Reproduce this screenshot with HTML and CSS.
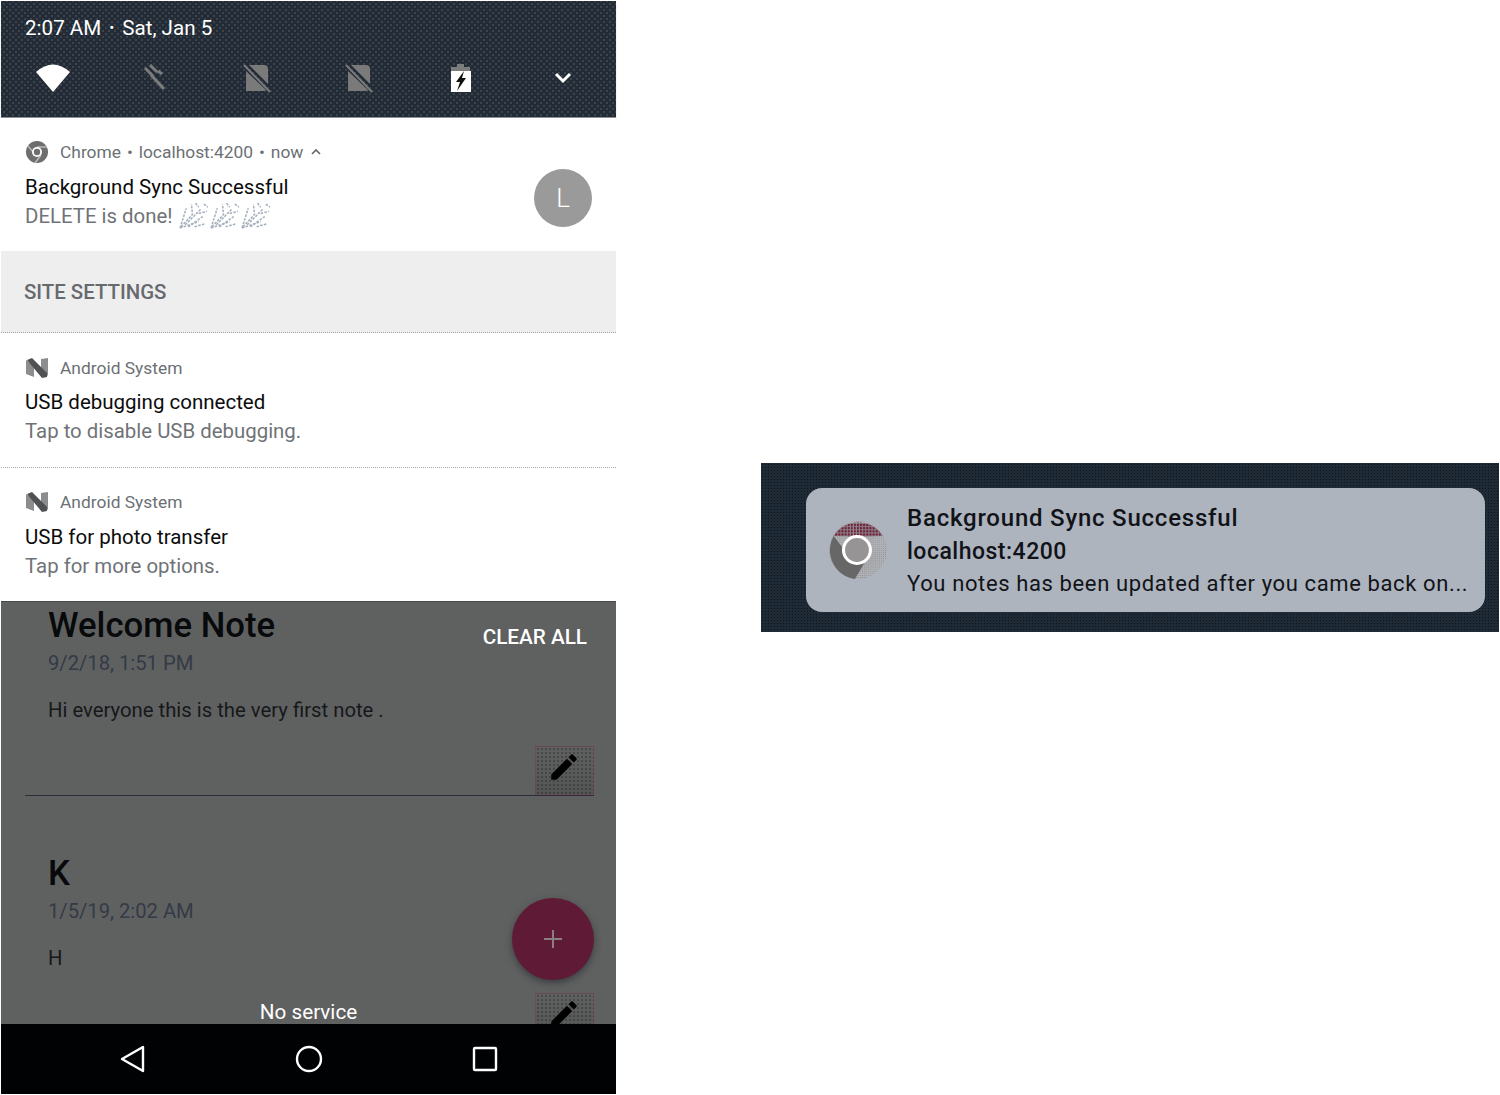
FILE: index.html
```html
<!DOCTYPE html>
<html lang="en">

<head>
    <meta charset="UTF-8">
    <meta name="viewport" content="width=device-width, initial-scale=1.0">
    <title>Background Sync</title>
    <link rel="stylesheet" href="styles.css">
</head>

<body>

    <svg class="defs" width="0" height="0">
        <defs>
            <pattern id="red-dots" width="3" height="3" patternUnits="userSpaceOnUse">
                <rect width="3" height="3" fill="#8e8a8b"></rect>
                <rect width="2" height="2" fill="#6f1a38"></rect>
            </pattern>
            <pattern id="grey-dots" width="2" height="2" patternUnits="userSpaceOnUse">
                <rect width="2" height="2" fill="#b0b3b8"></rect>
                <rect width="1" height="1" fill="#8f8d8e"></rect>
            </pattern>
            <symbol id="n-logo" viewBox="0 0 24 20">
                <path d="M1 2 L9 7 V19 L1 16 Z" fill="#8b8d8f"></path>
                <path d="M16 1 L23 0 V18 L16 12 Z" fill="#8b8d8f"></path>
                <path d="M2 2 L7 0 L22 15 V19 L17 20 Z" fill="#4f5254"></path>
            </symbol>
            <symbol id="pencil" viewBox="0 0 24 24">
                <path d="M3 17.25V21h3.75L17.81 9.94l-3.75-3.75L3 17.25zM20.71 7.04c.39-.39.39-1.02 0-1.41l-2.34-2.34c-.39-.39-1.02-.39-1.41 0l-1.83 1.83 3.75 3.75 1.83-1.83z"></path>
            </symbol>
            <symbol id="sim-off" viewBox="0 0 28 30">
                <path d="M6 2 H21 Q25 2 25 6 V21 Z" fill="#7a7a7a"></path>
                <path d="M3 8 L23 27 Q22 28 20 28 H3 Z" fill="#7a7a7a"></path>
                <path d="M1 2 L27 29" stroke="#7a7a7a" stroke-width="2"></path>
            </symbol>
            <symbol id="party" viewBox="0 0 30 26">
                <g fill="none" stroke="#a6b0be" stroke-width="1.5" stroke-dasharray="2.5 1.2">
                    <path d="M2 25 L8 6"></path>
                    <path d="M2 25 L20 19"></path>
                    <path d="M3 24 L14 12 L13 2"></path>
                    <path d="M7 22 L22 7"></path>
                    <path d="M10 24 L24 14"></path>
                    <path d="M25 2 L29 5"></path>
                    <path d="M17 1 L20 5"></path>
                    <path d="M16 24 L26 21"></path>
                    <path d="M20 11 L28 9"></path>
                </g>
            </symbol>
        </defs>
    </svg>

    <div class="page">

        <div class="phone">

            <header class="shade dots">
                <div class="shade-date">
                    <span>2:07 AM</span>
                    <span class="shade-sep">•</span>
                    <span>Sat, Jan 5</span>
                </div>
                <div class="shade-icons">
                    <svg width="36" height="30" viewBox="0 0 36 30">
                        <path d="M1 9 Q18 -6 35 9 L18 29 Z" fill="#fff"></path>
                    </svg>
                    <svg width="26" height="28" viewBox="0 0 26 28">
                        <path d="M3 4 L11 12 M8 1 L15 8 M9 11 L22 25 M16 7 L20 10" stroke="#7c7c7c" stroke-width="3" fill="none"></path>
                    </svg>
                    <svg width="28" height="30"><use href="#sim-off"></use></svg>
                    <svg width="28" height="30"><use href="#sim-off"></use></svg>
                    <svg width="22" height="30" viewBox="0 0 22 30">
                        <path d="M7 1 H14 V4 H20 V8 H1 V4 H7 Z" fill="#7c7c7c"></path>
                        <path d="M1 8 H21 V29 H1 Z" fill="#fff"></path>
                        <path d="M14 8 L6 19 H10 L7 28 L16 15 H12 Z" fill="#111"></path>
                    </svg>
                    <svg width="18" height="12" viewBox="0 0 18 12">
                        <path d="M2 2 L9 9 L16 2" stroke="#fff" stroke-width="3" fill="none"></path>
                    </svg>
                </div>
            </header>

            <section class="notif notif-chrome">
                <div class="notif-main">
                    <div class="notif-app">
                        <svg class="app-icon" width="24" height="24" viewBox="0 0 24 24">
                            <circle cx="12" cy="12" r="11" fill="#6e6e6e"></circle>
                            <path d="M3 6 L9 13 M12 7 H22 M16 15 L10 23" stroke="#bbb" stroke-width="1.4"></path>
                            <circle cx="12" cy="12" r="5" fill="#fff"></circle>
                            <circle cx="12" cy="12" r="3.2" fill="#6e6e6e"></circle>
                        </svg>
                        <span class="app-line">Chrome • localhost:4200 • now</span>
                        <svg class="app-caret" width="12" height="8" viewBox="0 0 12 8">
                            <path d="M2 6 L6 2 L10 6" stroke="#666" stroke-width="1.6" fill="none"></path>
                        </svg>
                    </div>
                    <div class="notif-title">Background Sync Successful</div>
                    <div class="notif-body body-party">
                        DELETE is done!
                        <span class="party-row">
                            <svg width="31" height="27"><use href="#party"></use></svg>
                            <svg width="31" height="27"><use href="#party"></use></svg>
                            <svg width="31" height="27"><use href="#party"></use></svg>
                        </span>
                    </div>
                </div>
                <div class="avatar">L</div>
            </section>

            <div class="site-settings">SITE SETTINGS</div>

            <section class="notif notif-system">
                <div class="notif-main">
                    <div class="notif-app">
                        <svg class="app-icon" width="24" height="20"><use href="#n-logo"></use></svg>
                        <span>Android System</span>
                    </div>
                    <div class="notif-title">USB debugging connected</div>
                    <div class="notif-body">Tap to disable USB debugging.</div>
                </div>
            </section>

            <section class="notif notif-system no-line">
                <div class="notif-main">
                    <div class="notif-app">
                        <svg class="app-icon" width="24" height="20"><use href="#n-logo"></use></svg>
                        <span>Android System</span>
                    </div>
                    <div class="notif-title">USB for photo transfer</div>
                    <div class="notif-body">Tap for more options.</div>
                </div>
            </section>

            <div class="behind">
                <article class="note note-first">
                    <h2 class="note-title">Welcome Note</h2>
                    <p class="note-date">9/2/18, 1:51 PM</p>
                    <p class="note-text">Hi everyone this is the very first note .</p>
                    <div class="edit-box">
                        <svg width="34" height="34"><use href="#pencil"></use></svg>
                    </div>
                </article>
                <article class="note">
                    <h2 class="note-title">K</h2>
                    <p class="note-date">1/5/19, 2:02 AM</p>
                    <p class="note-text">H</p>
                    <div class="edit-box">
                        <svg width="34" height="34"><use href="#pencil"></use></svg>
                    </div>
                </article>

                <div class="clear-all">CLEAR ALL</div>
                <div class="fab">
                    <svg width="22" height="22" viewBox="0 0 22 22">
                        <path d="M11 2 V20 M2 11 H20" stroke="#8b7f83" stroke-width="2"></path>
                    </svg>
                </div>
                <div class="no-service">No service</div>
            </div>

            <nav class="navbar">
                <svg width="26" height="28" viewBox="0 0 26 28">
                    <path d="M23 2 V26 L2 14 Z" fill="none" stroke="#fff" stroke-width="2.4" stroke-linejoin="round"></path>
                </svg>
                <svg width="28" height="28" viewBox="0 0 28 28">
                    <circle cx="14" cy="14" r="12" fill="none" stroke="#fff" stroke-width="2.4"></circle>
                </svg>
                <svg width="26" height="26" viewBox="0 0 26 26">
                    <rect x="2" y="2" width="22" height="22" rx="1" fill="none" stroke="#fff" stroke-width="2.4"></rect>
                </svg>
            </nav>
        </div>

        <aside class="toast-wrap dots-fine">
            <div class="toast">
                <svg class="toast-icon" width="58" height="58" viewBox="0 0 56 56">
                    <circle cx="28" cy="28" r="28" fill="url(#grey-dots)"></circle>
                    <path d="M4.5 14.5 A28 28 0 0 1 52 14.5 L28 15 Z" fill="url(#red-dots)"></path>
                    <path d="M4.5 14.5 A28 28 0 0 0 25 56 L35 39 L18 32 Z" fill="#666766"></path>
                    <circle cx="27" cy="28" r="13" fill="#979495" stroke="#fff" stroke-width="3"></circle>
                </svg>
                <div class="toast-text">
                    <div class="toast-title">Background Sync Successful</div>
                    <div class="toast-site">localhost:4200</div>
                    <div class="toast-msg">You notes has been updated after you came back on...</div>
                </div>
            </div>
        </aside>

    </div>

</body>

</html>
```
FILE: styles.css
```css
* {
    margin: 0;
    box-sizing: border-box;
}

html,
body {
    height: 100%;
    overflow: hidden;
}

body {
    background-color: #fff;
    font-family: 'Roboto', sans-serif;
}

.defs {
    position: absolute;
}

.page {
    display: flex;
    align-items: flex-start;
    padding: 1px 1px 0 1px;
}

.phone {
    width: 615px;
    height: 1093px;
    display: flex;
    flex-direction: column;
    flex-shrink: 0;
}

/* ---- status shade ---- */
.dots {
    background-color: #222b36;
    background-image:
        radial-gradient(circle, rgba(170, 175, 180, .42) .6px, transparent .8px),
        radial-gradient(circle, rgba(170, 175, 180, .42) .6px, transparent .8px);
    background-size: 6px 6px;
    background-position: 0 0, 3px 3px;
}

.shade {
    height: 117px;
    color: #fff;
    border-bottom: 1px solid #8f949b;
    box-shadow: 0 2px 2px #e4e4e4;
}

.shade-date {
    display: flex;
    align-items: center;
    gap: 7px;
    padding: 15px 0 0 24px;
    font-size: 20.6px;
    line-height: 24px;
}

.shade-sep {
    font-size: 15px;
    margin: 0 1px;
}

.shade-icons {
    display: grid;
    grid-template-columns: repeat(6, 102px);
    justify-items: center;
    align-items: center;
    padding: 19px 0 0 1px;
    height: 56px;
}

/* ---- notifications ---- */
.notif {
    display: flex;
    justify-content: space-between;
    padding: 0 24px;
    background-color: #fff;
}

.notif-chrome {
    height: 133px;
    padding-top: 22px;
}

.notif-system {
    height: 135px;
    padding-top: 23px;
    border-bottom: 1px dotted #a9adb3;
}

.no-line {
    height: 133px;
    padding-top: 22px;
    border-bottom: none;
}

.notif-app {
    display: flex;
    align-items: center;
    height: 24px;
    color: #6c7074;
    font-size: 17.4px;
}

.app-line {
    word-spacing: 1.6px;
}

.app-icon {
    margin-right: 11px;
    flex-shrink: 0;
}

.app-caret {
    margin-left: 7px;
}

.notif-title {
    margin-top: 10px;
    font-size: 20.5px;
    line-height: 26px;
    color: #0c0c0c;
}

.notif-system .notif-title {
    margin-top: 9px;
}

.no-line .notif-title {
    margin-top: 10px;
}

.notif-body {
    display: flex;
    align-items: center;
    gap: 5px;
    margin-top: 3px;
    font-size: 20.4px;
    line-height: 26px;
    color: #6f7377;
}

.body-party {
    margin-top: 2px;
}

.party-row {
    display: flex;
    gap: 0;
}

.avatar {
    width: 58px;
    height: 58px;
    margin: 29px 0 0 0;
    border-radius: 50%;
    background-color: #9a9a9a;
    color: #fff;
    font-size: 26px;
    font-weight: 300;
    display: flex;
    align-items: center;
    justify-content: center;
}

.site-settings {
    height: 82px;
    padding-left: 23px;
    display: flex;
    align-items: center;
    background-color: #eeeeee;
    border-bottom: 1px dotted #9ea3aa;
    color: #66696d;
    font-size: 20.4px;
    font-weight: 500;
}

/* ---- dimmed app behind the shade ---- */
.behind {
    position: relative;
    flex: 1;
    overflow: hidden;
    background-color: #5f6160;
    border-top: 1px solid #474948;
}

.note {
    margin: 54px 22px 0 24px;
    padding-left: 23px;
}

.note-first {
    margin-top: 0;
    border-bottom: 1px solid #2b2d38;
}

.note-first .edit-box {
    margin-top: 24px;
}

.note-title {
    font-size: 34.7px;
    font-weight: 500;
    line-height: 46px;
    color: #08090b;
}

.note-date {
    margin-top: 3px;
    font-size: 20.2px;
    line-height: 24px;
    color: #343a47;
}

.note-text {
    margin-top: 23px;
    font-size: 20.3px;
    line-height: 24px;
    color: #16181b;
}

.edit-box {
    width: 59px;
    height: 49px;
    margin: 23px 0 0 auto;
    padding: 0 2px 7px 0;
    display: flex;
    align-items: center;
    justify-content: center;
    border: 1px dotted #7a3a50;
    background-image: radial-gradient(circle, rgba(0, 0, 0, .5) .6px, transparent .8px), linear-gradient(rgba(0, 0, 0, 0), rgba(0, 0, 0, .12));
    background-size: 4px 4px, 100% 100%;
}

.clear-all {
    position: absolute;
    top: 23px;
    right: 29px;
    color: #fff;
    font-size: 20.7px;
    font-weight: 500;
    line-height: 24px;
}

.fab {
    position: absolute;
    top: 296px;
    left: 511px;
    width: 82px;
    height: 82px;
    border-radius: 50%;
    background-color: #5f1a35;
    box-shadow: 0 3px 7px rgba(30, 30, 40, .55);
    display: flex;
    align-items: center;
    justify-content: center;
}

.no-service {
    position: absolute;
    left: 0;
    right: 0;
    bottom: 0;
    height: 24px;
    text-align: center;
    color: #fff;
    font-size: 20.7px;
    line-height: 24px;
}

.navbar {
    height: 70px;
    background-color: #010204;
    display: grid;
    grid-template-columns: repeat(3, 176px);
    justify-content: center;
    justify-items: center;
    align-items: center;
}

/* ---- desktop toast ---- */
.dots-fine {
    background-color: #1f2a37;
    background-image: radial-gradient(circle, rgba(0, 0, 0, .55) .6px, transparent .8px);
    background-size: 3px 3px;
}

.toast-wrap {
    width: 738px;
    height: 169px;
    margin: 462px 0 0 145px;
    padding: 25px 14px 20px 45px;
}

.toast {
    height: 124px;
    display: flex;
    align-items: center;
    gap: 20px;
    padding-left: 23px;
    background-color: #adb4be;
    border-radius: 16px;
}

.toast-icon {
    flex-shrink: 0;
}

.toast-title {
    font-size: 24px;
    font-weight: 500;
    line-height: 34px;
    letter-spacing: .78px;
    color: #111318;
}

.toast-site {
    font-size: 23px;
    font-weight: 500;
    line-height: 34px;
    letter-spacing: .5px;
    color: #111318;
}

.toast-msg {
    font-size: 22px;
    line-height: 30px;
    letter-spacing: .62px;
    color: #111318;
}
```
